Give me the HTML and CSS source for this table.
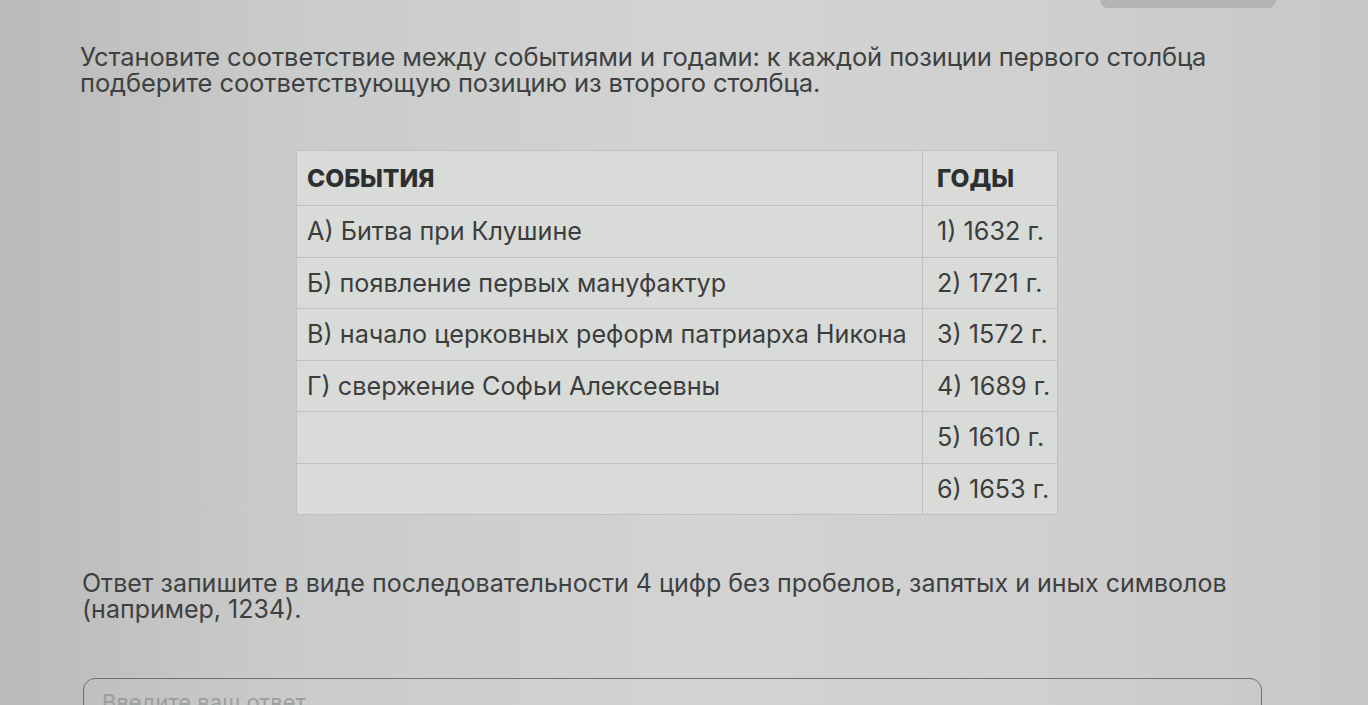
FILE: index.html
```html
<!DOCTYPE html>
<html lang="ru">
<head>
<meta charset="utf-8">
<link rel="stylesheet" href="styles.css">
</head>
<body>
<div class="topbar"><div class="topbtn"></div></div>
<main class="page">
  <p class="task">Установите соответствие между событиями и годами: к каждой позиции первого столбца подберите соответствующую позицию из второго столбца.</p>
  <table class="match">
    <tr class="head"><th class="c1">СОБЫТИЯ</th><th class="c2">ГОДЫ</th></tr>
    <tr><td class="c1">А) Битва при Клушине</td><td class="c2">1) 1632 г.</td></tr>
    <tr><td class="c1">Б) появление первых мануфактур</td><td class="c2">2) 1721 г.</td></tr>
    <tr><td class="c1">В) начало церковных реформ патриарха Никона</td><td class="c2">3) 1572 г.</td></tr>
    <tr><td class="c1">Г) свержение Софьи Алексеевны</td><td class="c2">4) 1689 г.</td></tr>
    <tr><td class="c1"></td><td class="c2">5) 1610 г.</td></tr>
    <tr><td class="c1"></td><td class="c2">6) 1653 г.</td></tr>
  </table>
  <p class="answer">Ответ запишите в виде последовательности 4 цифр без пробелов, запятых и иных символов (например, 1234).</p>
  <div class="inputbox"><span class="ph">Введите ваш ответ</span></div>
</main>
</body>
</html>
```
FILE: styles.css
```css
html, body {
  margin: 0;
  height: 705px;
  overflow: hidden;
}
body {
  background: linear-gradient(90deg, #b9bab9 0%, #c9caca 20%, #d2d3d2 50%, #cfd0cf 75%, #c6c7c6 100%);
  font-family: Inter, "Noto Sans", sans-serif;
  color: #3f4040;
  position: relative;
}
.topbar {
  height: 0;
}
.topbtn {
  position: absolute;
  left: 1100px;
  top: -12px;
  width: 176px;
  height: 20px;
  border-radius: 8px;
  background: #b3b4b4;
}
.page {
  padding: 44px 0 0 80px;
}
.task {
  margin: 0;
  font-size: 25.5px;
  line-height: 26px;
  width: 1190px;
  color: #3f4040;
  letter-spacing: -0.1px;
}
.match {
  margin: 54px 0 0 216px;
  border-collapse: collapse;
  width: 762px;
  table-layout: fixed;
  background: #d9dbd9;
  font-size: 25.2px;
}
.match th, .match td {
  border: 1px solid #bfc1bf;
  height: 50.5px;
  padding: 0 10px;
  text-align: left;
  vertical-align: middle;
  color: #3c3d3d;
  white-space: nowrap;
}
.match tr.head th {
  height: 54px;
  font-weight: 800;
  font-size: 24.5px;
  color: #2e2f30;
}
.match .c1 {
  width: 626px;
  box-sizing: border-box;
  padding-right: 2px;
}
.match .c2 {
  padding-left: 14px;
}
.answer {
  margin: 55px 0 0 2px;
  font-size: 25px;
  line-height: 26px;
  width: 1190px;
  color: #3f4040;
}
.inputbox {
  margin: 56px 0 0 3px;
  width: 1179px;
  height: 60px;
  border: 1.5px solid #6f7272;
  border-radius: 12px;
  box-sizing: border-box;
  padding: 10px 18px;
}
.ph {
  color: #9c9e9e;
  font-size: 22px;
}
```
